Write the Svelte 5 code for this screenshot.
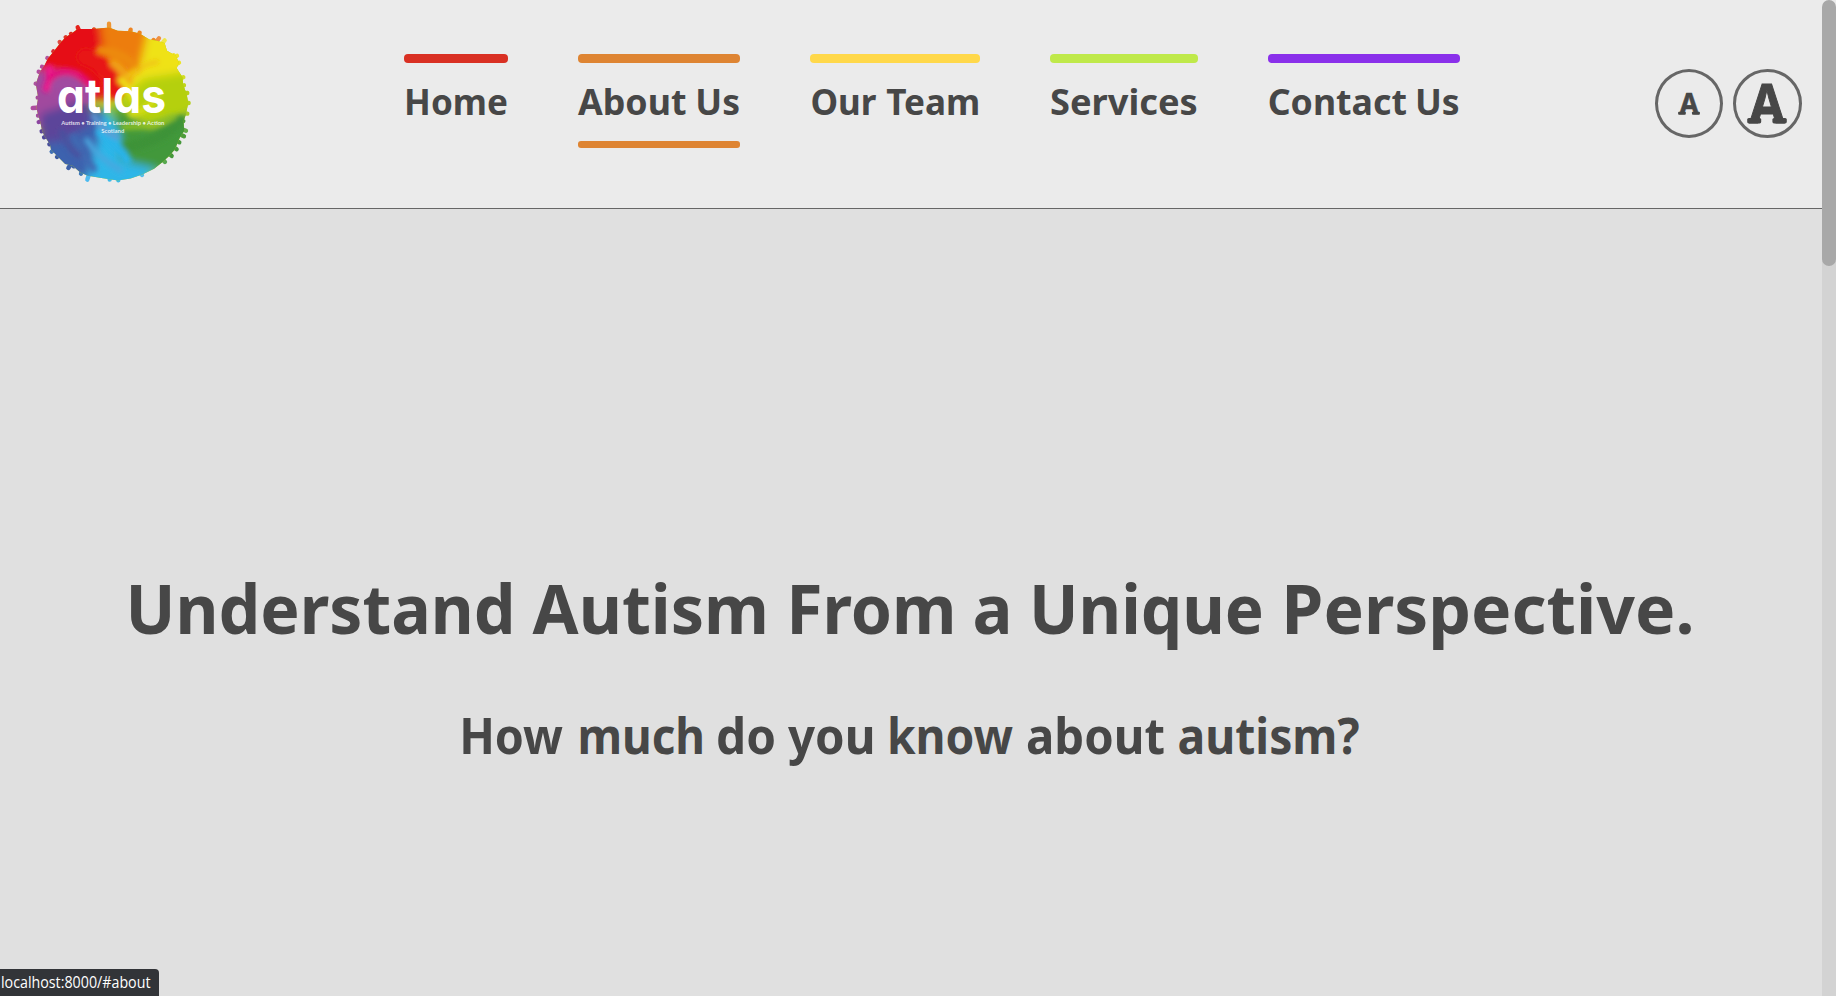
<script>
  const nav = [
    { color: '#d93023', width: 104, words: [['Home', 0.1, 103.9]] },
    { color: '#de8432', width: 162, active: true, words: [['About', 0, 108.5], ['Us', 117.3, 44.7]] },
    { color: '#ffd84a', width: 170, words: [['Our', 0.4, 66], ['Team', 76.2, 94]] },
    { color: '#bfe94a', width: 148, words: [['Services', 0, 147.8]] },
    { color: '#8a30ea', width: 192, words: [['Contact', -0.3, 139.2], ['Us', 147, 44.7]] }
  ];
  const title = [
    ['Understand', 5.5, 390], ['Autism', 412.6, 236.4], ['From', 666.2, 170.3],
    ['a', 852.5, 40], ['Unique', 909, 235], ['Perspective.', 1161.3, 413.2]
  ];
  const subtitle = [
    ['How', 9.2, 103.8], ['much', 127.4, 127.6], ['do', 266, 60], ['you', 338, 87.5],
    ['know', 437, 126], ['about', 576, 139], ['autism?', 727.5, 182]
  ];
  // droplets around the paint disc: x, y, colour
  const drops = [
    [202, 81, '#e5201a'], [251, 87, '#e2471a'], [296, 70, '#ee9632'], [361, 88, '#ee8420'],
    [388, 97, '#ee8420'], [446, 114, '#ef9040'], [430, 119, '#ef8a20'], [463, 120, '#f0e64a'],
    [490, 165, '#efe32a'], [500, 166, '#efe32a'], [506, 187, '#eee420'], [519, 231, '#d3dd20'],
    [521, 255, '#c0d51c'], [531, 278, '#b8d01a'], [535, 308, '#b5d020'], [531, 340, '#aacb22'],
    [519, 362, '#4d9c3a'], [527, 391, '#64ad4a'], [521, 408, '#4d9c3a'], [507, 426, '#45983a'],
    [499, 447, '#45983a'], [484, 467, '#45983a'], [464, 485, '#58a850'], [395, 524, '#55bfe8'],
    [324, 540, '#3dbbea'], [298, 538, '#3dbbea'], [231, 538, '#4dbbf0'], [212, 520, '#3b78b8'],
    [190, 498, '#3b60a8'], [174, 503, '#3b60a8'], [140, 470, '#3b58a0'], [124, 454, '#4070b5'],
    [117, 432, '#49509c'], [101, 411, '#50469a'], [94, 393, '#5a429a'], [85, 365, '#8c45a0'],
    [83, 346, '#a04ba0'], [67, 323, '#ae4d9e'], [82, 292, '#a54d9b'], [76, 250, '#ad529f'],
    [85, 214, '#b24da0'], [95, 199, '#b64a9c'], [111, 173, '#b3549c'], [129, 153, '#d82732'],
    [148, 125, '#df4a40'], [166, 111, '#de3028'], [182, 101, '#dc2820']
  ];
</script>

{#snippet slabA(width, height)}
  <svg {width} {height} viewBox="0 0 40 40" preserveAspectRatio="none">
    <text class="letter" x="2.6" y="38.6" textLength="34.8" lengthAdjust="spacingAndGlyphs">A</text>
    <rect x="0.2" y="34" width="14" height="5.4" rx="1.6" />
    <rect x="25.4" y="34" width="14.4" height="5.4" rx="1.6" />
    <rect x="14.6" y="0" width="10.6" height="6" rx="3" />
  </svg>
{/snippet}

<div class="window">
  <div class="page">
    <header>
      <a class="logo" href="#home" aria-label="atlas">
        <svg viewBox="0 0 500 500" width="166.67" height="166.67">
          <defs>
            <clipPath id="disc">
              <path transform="translate(302 308) scale(1.012) translate(-302 -308)" d="M132 155L150 132L166 114L188 100L203 89L250 89L296 84L322 94L361 95L388 103L416 120L440 124L461 130L468 153L494 168L503 187L497 205L514 232L516 255L526 280L531 308L524 342L517 362L519 391L506 410L500 426L490 447L476 464L454 484L430 503L395 520L360 532L322 538L278 531L233 524L211 514L188 494L166 489L141 464L124 446L121 430L104 405L97 388L92 362L86 344L81 322L86 292L79 252L91 216L105 196L115 176Z" />
            </clipPath>
            <filter id="wide" x="-30%" y="-30%" width="160%" height="160%"><feGaussianBlur stdDeviation="12" /></filter>
            <filter id="fine" x="-30%" y="-30%" width="160%" height="160%"><feGaussianBlur stdDeviation="8" /></filter>
            <filter id="edge"><feGaussianBlur stdDeviation="1.8" /></filter>
          </defs>
          <g transform="translate(-50 -50)">
            <g filter="url(#edge)">
              {#each drops as [x, y, color]}
                <line x1={x} y1={y} x2={x + (302 - x) * 0.1} y2={y + (308 - y) * 0.1} stroke={color} stroke-width="13" stroke-linecap="round" />
              {/each}
              <g clip-path="url(#disc)">
                <rect x="50" y="50" width="500" height="500" fill="#b4cf1a" />
                <g filter="url(#wide)">
                  <path d="M300 300L60 260L80 40L290 40Z" fill="#e60f12" />
                  <path d="M300 300L285 190L265 40L430 40L420 190Z" fill="#ed7d0a" />
                  <path d="M310 300L390 190L420 60L560 90L550 225L400 240Z" fill="#efe212" />
                  <path d="M330 300L400 235L560 210L560 350L400 370Z" fill="#b5d010" />
                  <path d="M310 310L420 385L560 330L540 530L330 490Z" fill="#43983a" />
                  <path d="M290 320L330 400L330 480L440 505L370 570L190 560L220 460Z" fill="#2fb6e8" />
                  <path d="M280 320L270 400L230 540L60 480L100 370Z" fill="#3d62ae" />
                  <path d="M50 200L190 225L230 300L180 400L50 380Z" fill="#a14a9e" />
                  <path d="M90 340L240 290L240 370L160 420L90 430Z" fill="#5c449a" />
                </g>
                <g filter="url(#fine)" fill="none" stroke-linecap="round">
                  <path d="M118 205Q120 245 108 265" stroke="#ee168c" stroke-width="22" />
                  <path d="M120 235Q150 200 208 225Q240 245 250 280" stroke="#e2107b" stroke-width="18" />
                  <path d="M140 260Q180 225 226 290" stroke="#a04ba0" stroke-width="42" />
                  <path d="M225 170Q290 190 315 270" stroke="#e81812" stroke-width="50" />
                  <path d="M270 150Q340 155 380 205" stroke="#ed8a0b" stroke-width="26" />
                  <path d="M310 190Q355 220 350 250" stroke="#f0a018" stroke-width="24" />
                  <path d="M330 240Q365 265 370 300" stroke="#eee318" stroke-width="18" />
                  <path d="M350 230Q400 190 440 185" stroke="#f0c414" stroke-width="14" />
                  <path d="M440 280Q420 330 365 340" stroke="#d2dc18" stroke-width="22" />
                  <path d="M510 360Q450 425 350 440" stroke="#3d9339" stroke-width="32" />
                  <path d="M490 350Q430 380 340 380" stroke="#8abf26" stroke-width="18" />
                  <path d="M270 395Q330 445 350 480" stroke="#2ab4ea" stroke-width="28" />
                  <path d="M230 420Q260 470 330 510" stroke="#48a8df" stroke-width="16" />
                  <path d="M190 410Q215 470 250 505" stroke="#4169b2" stroke-width="20" />
                  <path d="M155 395Q170 440 205 465" stroke="#4a519f" stroke-width="18" />
                  <path d="M250 345Q270 390 320 410" stroke="#5f9bd2" stroke-width="16" />
                </g>
              </g>
            </g>
            <text class="brand" x="140" y="338" textLength="327" lengthAdjust="spacingAndGlyphs">atlas</text>
            <text class="tagline" x="153" y="374" textLength="309" lengthAdjust="spacingAndGlyphs">Autism • Training • Leadership • Action</text>
            <text class="tagline" x="273" y="397" textLength="69" lengthAdjust="spacingAndGlyphs">Scotland</text>
          </g>
        </svg>
      </a>

      <nav>
        {#each nav as item}
          <a class="item" class:active={item.active} href="#about" style="width:{item.width}px;--accent:{item.color}">
            <svg width={item.width} height="78">
              <text y="52">{#each item.words as [word, x, length], i}{i ? ' ' : ''}<tspan {x} textLength={length} lengthAdjust="spacingAndGlyphs">{word}</tspan>{/each}</text>
            </svg>
          </a>
        {/each}
      </nav>

      <div class="sizes">
        <button class="small">{@render slabA(22, 22)}</button>
        <button class="large">{@render slabA(40, 40)}</button>
      </div>
    </header>

    <main>
      <h1>
        <svg width="1582" height="90">
          <text y="64">{#each title as [word, x, length], i}{i ? ' ' : ''}<tspan {x} textLength={length} lengthAdjust="spacingAndGlyphs">{word}</tspan>{/each}</text>
        </svg>
      </h1>
      <h2>
        <svg width="922" height="66">
          <text y="46">{#each subtitle as [word, x, length], i}{i ? ' ' : ''}<tspan {x} textLength={length} lengthAdjust="spacingAndGlyphs">{word}</tspan>{/each}</text>
        </svg>
      </h2>
    </main>
  </div>
  <div class="scrollbar"><div class="thumb"></div></div>
  <div class="status">
    <svg width="159" height="27"><text x="1" y="19" textLength="149.5" lengthAdjust="spacingAndGlyphs">localhost:8000/#about</text></svg>
  </div>
</div>

<style>
  :global(body) { margin: 0; overflow: hidden; }
  .window {
    position: relative;
    display: flex;
    width: 1836px;
    height: 996px;
    overflow: hidden;
    background: #e0e0e0;
    font-family: 'Noto Sans', sans-serif;
    color: #474747;
  }
  svg { display: block; overflow: visible; }
  .page { flex: 1; display: flex; flex-direction: column; }
  header {
    display: flex;
    align-items: flex-start;
    box-sizing: border-box;
    height: 209px;
    padding-left: 26.67px;
    background: #ebebeb;
    border-bottom: 1px solid #666;
  }
  .logo { width: 166.67px; padding-top: 16.67px; }
  .brand {
    font-family: Inter, sans-serif;
    font-size: 144px;
    font-weight: 700;
    font-feature-settings: 'cv11' 1;
    fill: #fff;
  }
  .tagline { font-family: Lato, sans-serif; font-size: 18px; font-weight: 700; fill: #fff; fill-opacity: .82; }
  nav { display: flex; gap: 70px; padding-top: 54px; margin-left: 210.66px; }
  .item { display: block; box-sizing: border-box; color: inherit; text-decoration: none; }
  .item::before {
    content: '';
    display: block;
    height: 9px;
    border-radius: 4px;
    background: var(--accent);
  }
  .item.active::after {
    content: '';
    display: block;
    height: 7px;
    border-radius: 3px;
    background: var(--accent);
  }
  .item text { font-size: 36.4px; font-weight: 700; fill: #474747; }
  .sizes { display: flex; gap: 10px; margin-left: 195px; padding-top: 69px; }
  button {
    display: flex;
    align-items: center;
    justify-content: center;
    box-sizing: border-box;
    width: 69px;
    height: 69px;
    padding: 0;
    border: 3px solid #666;
    border-radius: 50%;
    background: transparent;
  }
  button.small { width: 68px; }
  button svg { fill: #474747; }
  .letter {
    font-family: 'Noto Sans', sans-serif;
    font-size: 53px;
    font-weight: 700;
    stroke: #474747;
    stroke-width: 1;
  }
  main { flex: 1; display: flex; flex-direction: column; align-items: center; padding-top: 361px; }
  h1, h2 { margin: 0; }
  h1 text { font-size: 69px; font-weight: 700; fill: #474747; }
  h2 { margin-top: 48px; }
  h2 text { font-size: 49.4px; font-weight: 700; fill: #474747; }
  .scrollbar { width: 14px; background: linear-gradient(#ebebeb 0 8px, #d3d3d3 8px); }
  .thumb { height: 266px; border-radius: 7px; background: #a8a8a8; }
  .status {
    position: absolute;
    left: 0;
    bottom: 0;
    width: 159px;
    height: 27px;
    border-top-right-radius: 4px;
    background: #323438;
  }
  .status text { font-family: 'Open Sans', sans-serif; font-size: 15.5px; fill: #fff; }
</style>
